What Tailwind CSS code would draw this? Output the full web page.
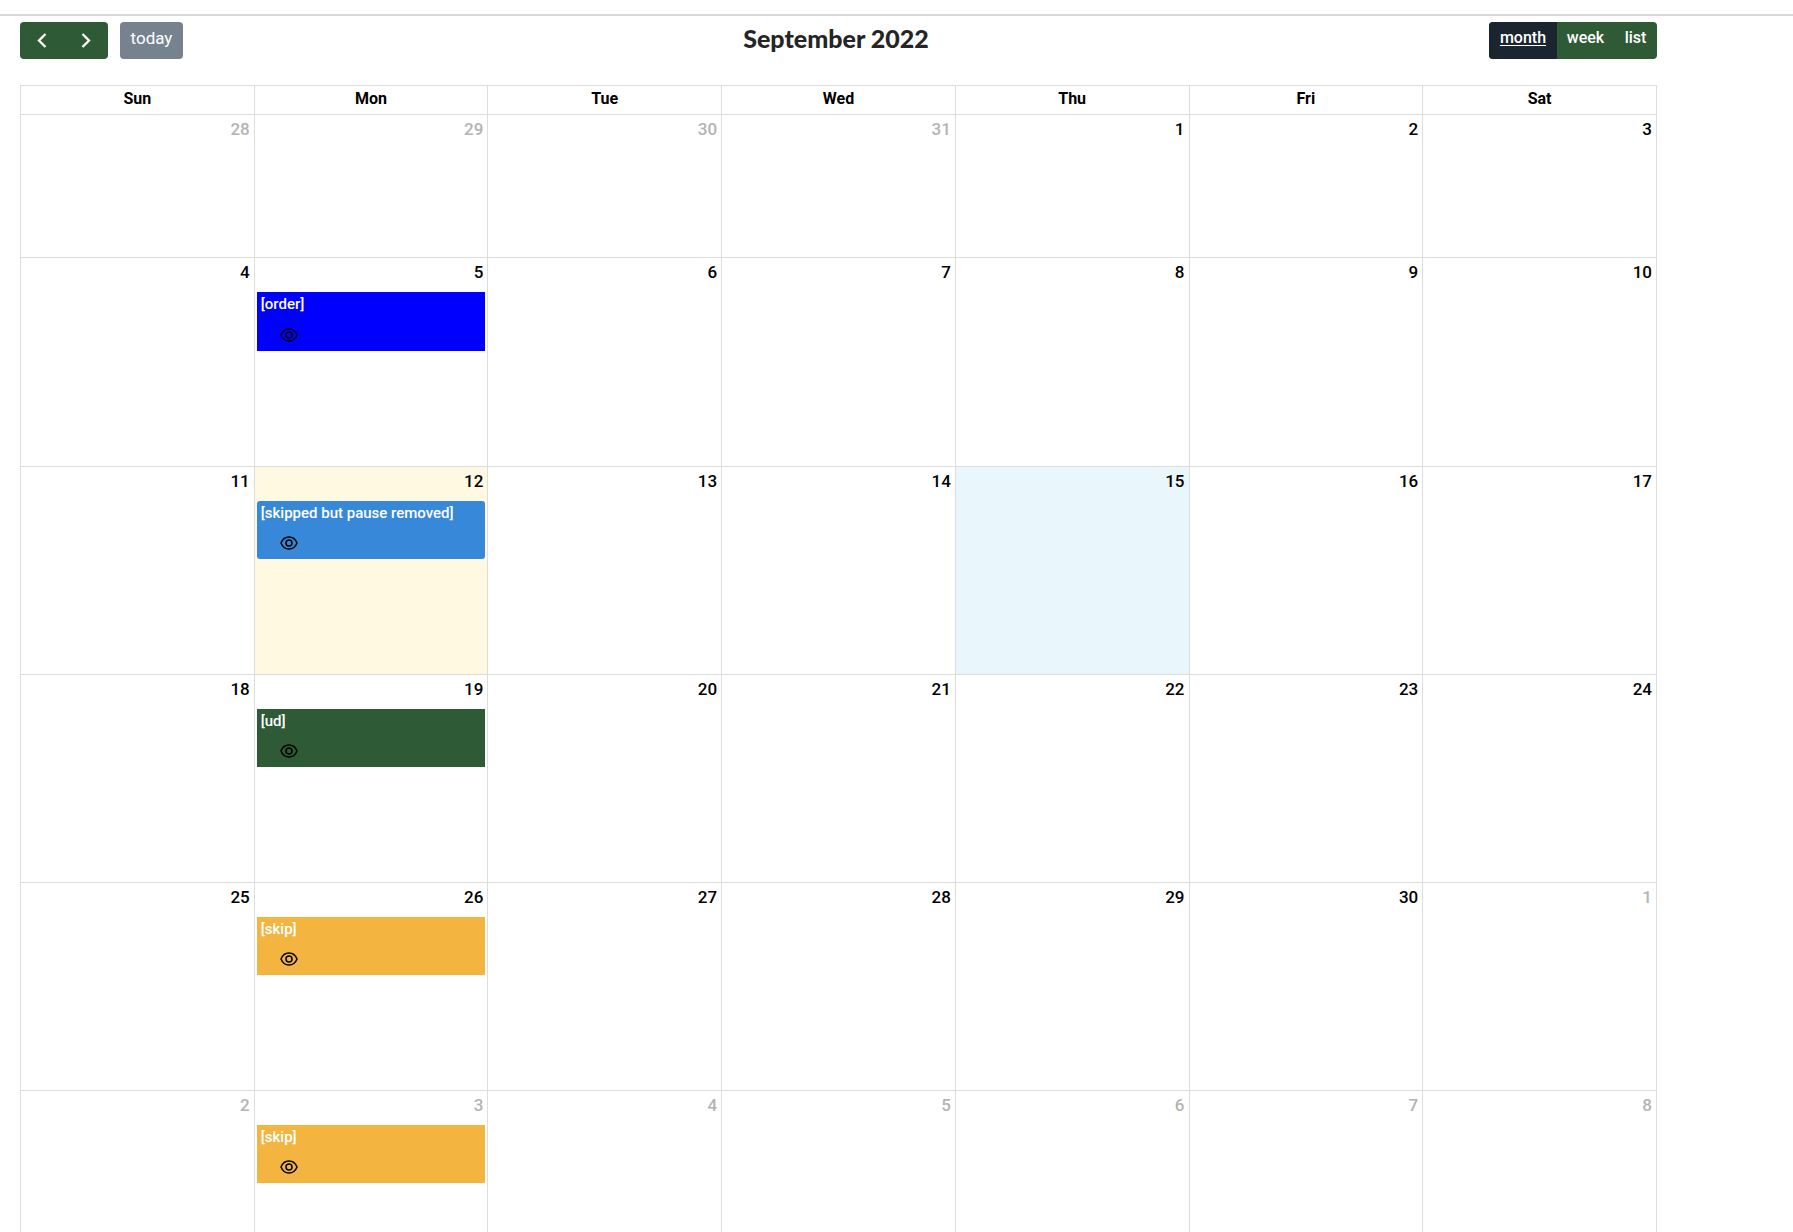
<!DOCTYPE html>
<html lang="en">
<head>
<meta charset="utf-8">
<meta name="viewport" content="width=device-width, initial-scale=1">
<title>September 2022</title>
<script src="https://cdn.jsdelivr.net/npm/@tailwindcss/browser@4"></script>
</head>
<body class="bg-white font-[Roboto,sans-serif] text-[17px] leading-6 font-medium text-black">
<svg class="hidden" aria-hidden="true">
  <symbol id="eye" viewBox="0 0 18 14">
    <path d="M1 7C2.500 3.200 5.500 1 9 1s6.500 2.200 8 6c-1.500 3.800-4.500 6-8 6S2.500 10.800 1 7Z" fill="none" stroke="currentColor" stroke-width="1.500" stroke-linejoin="round"/>
    <circle cx="9" cy="7" r="3" fill="none" stroke="currentColor" stroke-width="1.500"/>
  </symbol>
</svg>
<div class="mt-[14px] border-t-2 border-[#d9d9d9]"></div>
<main class="pt-[6px] pr-[136px] pl-5">
  <header class="mb-[26px] flex h-[37px] items-stretch justify-between">
    <div class="flex gap-3">
      <div class="flex overflow-hidden rounded bg-[#2e5b36] text-white">
        <button type="button" aria-label="Previous month" class="flex w-11 items-center justify-center"><svg class="h-4 w-4" viewBox="0 0 16 16" fill="none" stroke="currentColor" stroke-width="2.300"><path d="M11.500 1 5 7.500l6.500 6.500"/></svg></button>
        <button type="button" aria-label="Next month" class="flex w-11 items-center justify-center"><svg class="h-4 w-4" viewBox="0 0 16 16" fill="none" stroke="currentColor" stroke-width="2.300"><path d="M4.500 1 11 7.500 4.500 14"/></svg></button>
      </div>
      <button type="button" disabled class="w-[63px] rounded bg-[#76828d] pb-[6px] font-normal text-white">today</button>
    </div>
    <h1 class="font-[Lato,sans-serif] text-[25px] leading-8 font-black text-[#252525]">September 2022</h1>
    <div class="flex overflow-hidden rounded bg-[#2e5b36] text-base text-white">
      <button type="button" aria-pressed="true" class="w-[68px] bg-[#1a252f] pb-[6px] underline underline-offset-2">month</button>
      <button type="button" class="w-[57px] pb-[6px]">week</button>
      <button type="button" class="w-[43px] pb-[6px]">list</button>
    </div>
  </header>
  <table class="w-full table-fixed border-collapse border-x border-t border-[#ddd] [&_td]:border-t [&_td]:border-l [&_td]:border-[#ddd] [&_td]:p-0 [&_td]:text-right [&_td]:align-top [&_th]:border-l [&_th]:border-[#ddd] [&_th]:p-0 [&_th]:pb-[2px] [&_th]:text-base [&_th]:leading-6 [&_th]:font-bold [&_time]:block [&_time]:px-1 [&_time]:pt-[2px]">
    <thead><tr class="h-[29px]"><th>Sun</th><th>Mon</th><th>Tue</th><th>Wed</th><th>Thu</th><th>Fri</th><th>Sat</th></tr></thead>
    <tbody>
      <tr class="h-[143px]">
        <td class="text-[#b3b3b3]"><time>28</time></td><td class="text-[#b3b3b3]"><time>29</time></td><td class="text-[#b3b3b3]"><time>30</time></td><td class="text-[#b3b3b3]"><time>31</time></td><td><time>1</time></td><td><time>2</time></td><td><time>3</time></td>
      </tr>
      <tr class="h-[209px]">
        <td><time>4</time></td>
        <td><time>5</time>
          <article class="mx-[2px] mt-2 h-[59px] bg-[#0000ff] px-1 text-left text-[15px] text-white"><p>[order]</p><button type="button" aria-label="View order" class="mt-3 ml-[19px] block text-black"><svg class="h-[14px] w-[18px]"><use href="#eye"/></svg></button></article></td>
        <td><time>6</time></td><td><time>7</time></td><td><time>8</time></td><td><time>9</time></td><td><time>10</time></td>
      </tr>
      <tr class="h-[208px]">
        <td><time>11</time></td>
        <td class="bg-[#fff9e1]"><time>12</time>
          <article class="mx-[2px] mt-2 h-[58px] rounded-[3px] bg-[#3788d8] px-1 text-left text-[15px] text-white"><p class="whitespace-nowrap">[skipped but pause removed]</p><button type="button" aria-label="View skipped order" class="mt-[11px] ml-[19px] block text-black"><svg class="h-[14px] w-[18px]"><use href="#eye"/></svg></button></article></td>
        <td><time>13</time></td><td><time>14</time></td><td class="bg-[#e9f7fc]"><time>15</time></td><td><time>16</time></td><td><time>17</time></td>
      </tr>
      <tr class="h-[208px]">
        <td><time>18</time></td>
        <td><time>19</time>
          <article class="mx-[2px] mt-2 h-[58px] bg-[#2e5b36] px-1 text-left text-[15px] text-white"><p>[ud]</p><button type="button" aria-label="View delivery" class="mt-[11px] ml-[19px] block text-black"><svg class="h-[14px] w-[18px]"><use href="#eye"/></svg></button></article></td>
        <td><time>20</time></td><td><time>21</time></td><td><time>22</time></td><td><time>23</time></td><td><time>24</time></td>
      </tr>
      <tr class="h-[208px]">
        <td><time>25</time></td>
        <td><time>26</time>
          <article class="mx-[2px] mt-2 h-[58px] bg-[#f3b53f] px-1 text-left text-[15px] text-white"><p>[skip]</p><button type="button" aria-label="View skip" class="mt-[11px] ml-[19px] block text-black"><svg class="h-[14px] w-[18px]"><use href="#eye"/></svg></button></article></td>
        <td><time>27</time></td><td><time>28</time></td><td><time>29</time></td><td><time>30</time></td><td class="text-[#b3b3b3]"><time>1</time></td>
      </tr>
      <tr class="h-[142px] text-[#b3b3b3]">
        <td><time>2</time></td>
        <td><time>3</time>
          <article class="mx-[2px] mt-2 h-[58px] bg-[#f3b53f] px-1 text-left text-[15px] text-white"><p>[skip]</p><button type="button" aria-label="View skip" class="mt-[11px] ml-[19px] block text-black"><svg class="h-[14px] w-[18px]"><use href="#eye"/></svg></button></article></td>
        <td><time>4</time></td><td><time>5</time></td><td><time>6</time></td><td><time>7</time></td><td><time>8</time></td>
      </tr>
    </tbody>
  </table>
</main>
</body>
</html>
